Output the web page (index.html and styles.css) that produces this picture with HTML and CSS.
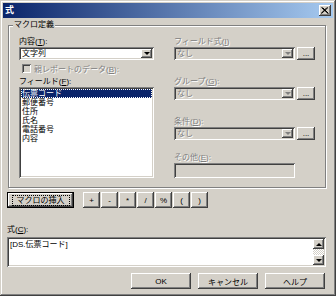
FILE: index.html
```html
<!DOCTYPE html>
<html lang="ja">
<head>
    <meta charset="UTF-8">
    <title>式</title>
    <link rel="stylesheet" href="styles.css">
</head>
<body>
    <div class="window">
        <div class="titlebar">
            <span class="title">式</span>
            <span class="close">
                <svg width="8" height="7" viewBox="0 0 8 7">
                    <path d="M0.5 0.5 L7 6.5 M1.5 0.5 L7.5 6.5 M7 0.5 L0.5 6.5 M6 0.5 L0 6.5" stroke="#000" stroke-width="1" fill="none"/>
                </svg>
            </span>
        </div>

        <div class="content">
            <fieldset class="group">
                <legend>マクロ定義</legend>
                <div class="cols">
                    <div class="col">
                        <div class="label">内容(<u>T</u>):</div>
                        <div class="combo">
                            <span class="value">文字列</span>
                            <span class="drop"><i class="arrow"></i></span>
                        </div>
                        <div class="check disabled">
                            <span class="box"></span>
                            <span>親レポートのデータ(<u>B</u>):</span>
                        </div>
                        <div class="label label-list">フィールド(<u>F</u>):</div>
                        <div class="listbox">
                            <div class="item selected">伝票コード</div>
                            <div class="item">郵便番号</div>
                            <div class="item">住所</div>
                            <div class="item">氏名</div>
                            <div class="item">電話番号</div>
                            <div class="item">内容</div>
                        </div>
                    </div>

                    <div class="col">
                        <div class="field">
                            <div class="label disabled">フィールド式(<u>I</u>)</div>
                            <div class="row">
                                <div class="combo off">
                                    <span class="value">なし</span>
                                    <span class="drop"><i class="arrow"></i></span>
                                </div>
                                <button class="btn more" type="button">...</button>
                            </div>
                        </div>
                        <div class="field">
                            <div class="label disabled">グループ(<u>G</u>):</div>
                            <div class="row">
                                <div class="combo off">
                                    <span class="value">なし</span>
                                    <span class="drop"><i class="arrow"></i></span>
                                </div>
                                <button class="btn more" type="button">...</button>
                            </div>
                        </div>
                        <div class="field">
                            <div class="label disabled">条件(<u>D</u>):</div>
                            <div class="row">
                                <div class="combo off">
                                    <span class="value">なし</span>
                                    <span class="drop"><i class="arrow"></i></span>
                                </div>
                                <button class="btn more" type="button">...</button>
                            </div>
                        </div>
                        <div class="field other">
                            <div class="label disabled">その他(<u>E</u>):</div>
                            <div class="textbox"></div>
                        </div>
                    </div>
                </div>
            </fieldset>

            <div class="ops">
                <button class="btn default insert" type="button"><span class="focus">マクロの挿入</span></button>
                <div class="op_buttons">
                    <button class="btn op" type="button">+</button>
                    <button class="btn op" type="button">-</button>
                    <button class="btn op" type="button">*</button>
                    <button class="btn op" type="button">/</button>
                    <button class="btn op" type="button">%</button>
                    <button class="btn op" type="button">(</button>
                    <button class="btn op" type="button">)</button>
                </div>
            </div>

            <div class="label label-memo">式(<u>C</u>):</div>
            <div class="memo">
                <div class="memo_text">[DS.伝票コード]</div>
                <div class="scrollbar">
                    <span class="sb_btn"><i class="arrow up"></i></span>
                    <span class="sb_track"></span>
                    <span class="sb_btn"><i class="arrow"></i></span>
                </div>
            </div>

            <div class="actions">
                <button class="btn action" type="button">OK</button>
                <button class="btn action" type="button">キャンセル</button>
                <button class="btn action" type="button">ヘルプ</button>
            </div>
        </div>
    </div>
</body>
</html>
```

FILE: styles.css
```css
* {
    box-sizing: border-box;
}
body {
    margin: 0;
    font-family: "Liberation Sans", "Noto Sans CJK JP", sans-serif;
    font-size: 8px;
    color: #000;
    background-color: #d4d0c8;
}
u {
    text-decoration-thickness: 1px;
    text-underline-offset: 1px;
}
.window {
    width: 336px;
    height: 296px;
    padding: 3px;
    background-color: #d4d0c8;
    box-shadow: inset -1px -1px #404040, inset 1px 1px #d4d0c8, inset -2px -2px #808080, inset 2px 2px #fff;
}
.titlebar {
    height: 15px;
    display: flex;
    align-items: center;
    justify-content: space-between;
    padding: 0 2px 0 2px;
    background: linear-gradient(to right, #0a246a, #a6caf0);
}
.title {
    color: white;
    font-weight: bold;
    font-size: 9px;
    line-height: 15px;
}
.close {
    width: 12px;
    height: 11px;
    display: flex;
    align-items: center;
    justify-content: center;
    background-color: #d4d0c8;
    box-shadow: inset -1px -1px #404040, inset 1px 1px #fff, inset -2px -2px #808080;
}
.content {
    padding: 0 7px 0 4px;
}

/* group box */
.group {
    margin: 2px 0 0 1px;
    padding: 7px 10px 9px 10px;
    min-width: 0;
    border: 1px solid #808080;
    box-shadow: 1px 1px 0 #fff, inset 1px 1px 0 #fff;
}
.group legend {
    margin-left: -6px;
    padding: 0 1px;
    line-height: 10px;
    background-color: #d4d0c8;
}
.cols {
    display: grid;
    grid-template-columns: 135px 141px;
    column-gap: 20px;
}
.label {
    line-height: 10px;
    height: 10px;
    white-space: nowrap;
}
.disabled {
    color: #808080;
    text-shadow: 1px 1px 0 #fff;
}

/* combo box */
.combo {
    height: 13px;
    display: flex;
    align-items: center;
    padding: 2px;
    background-color: white;
    box-shadow: inset 1px 1px #808080, inset -1px -1px #fff, inset 2px 2px #404040, inset -2px -2px #d4d0c8;
}
.combo .value {
    flex: 1;
    line-height: 9px;
    padding-left: 1px;
}
.combo.off {
    width: 121px;
    background-color: #d4d0c8;
    color: #808080;
    text-shadow: 1px 1px 0 #fff;
}
.drop {
    width: 11px;
    height: 9px;
    display: flex;
    align-items: center;
    justify-content: center;
    background-color: #d4d0c8;
    box-shadow: inset -1px -1px #404040, inset 1px 1px #fff, inset -2px -2px #808080;
}
.arrow {
    display: block;
    width: 0;
    height: 0;
    border-left: 3px solid transparent;
    border-right: 3px solid transparent;
    border-top: 3px solid #000;
}
.arrow.up {
    border-top: none;
    border-bottom: 3px solid #000;
}
.combo.off .arrow {
    border-top-color: #808080;
}

/* checkbox */
.check {
    height: 11px;
    margin-top: 3px;
    display: flex;
    align-items: center;
    gap: 3px;
    padding-left: 3px;
    white-space: nowrap;
}
.check .box {
    width: 9px;
    height: 9px;
    background-color: #d4d0c8;
    box-shadow: inset 1px 1px #808080, inset -1px -1px #fff, inset 2px 2px #404040;
}
.label-list {
    margin-top: 3px;
}

/* list box */
.listbox {
    height: 91px;
    padding: 2px;
    background-color: white;
    box-shadow: inset 1px 1px #808080, inset -1px -1px #fff, inset 2px 2px #404040, inset -2px -2px #d4d0c8;
}
.item {
    line-height: 9px;
    height: 9px;
    padding-left: 1px;
    white-space: nowrap;
}
.item.selected {
    background-color: #0a246a;
    color: white;
    outline: 1px dotted #fff;
    outline-offset: -1px;
}

/* right column */
.field + .field {
    margin-top: 17px;
}
.field.other {
    margin-top: 13px;
}
.row {
    height: 13px;
    display: flex;
    gap: 2px;
}
.textbox {
    width: 121px;
    height: 15px;
    background-color: #d4d0c8;
    box-shadow: inset 1px 1px #808080, inset -1px -1px #fff, inset 2px 2px #404040, inset -2px -2px #d4d0c8;
}

/* buttons */
.btn {
    padding: 0;
    border: none;
    font: inherit;
    color: #000;
    background-color: #d4d0c8;
    box-shadow: inset -1px -1px #404040, inset 1px 1px #fff, inset -2px -2px #808080;
    cursor: pointer;
}
.btn.default {
    box-shadow: inset 0 0 0 1px #000, inset -2px -2px #404040, inset 2px 2px #fff, inset -3px -3px #808080;
}
.more {
    width: 18px;
    height: 13px;
    line-height: 8px;
}
.ops {
    margin-top: 4px;
    height: 16px;
    display: flex;
    gap: 9px;
}
.insert {
    width: 67px;
    height: 16px;
    display: flex;
    align-items: center;
    justify-content: center;
}
.focus {
    border: 1px dotted #000;
    padding: 0 4px;
    line-height: 9px;
}
.op_buttons {
    display: flex;
    gap: 1px;
}
.op {
    width: 17px;
    height: 16px;
}

/* formula */
.label-memo {
    margin-top: 17px;
}
.memo {
    margin-top: 2px;
    height: 30px;
    display: flex;
    padding: 2px;
    background-color: white;
    box-shadow: inset 1px 1px #808080, inset -1px -1px #fff, inset 2px 2px #404040, inset -2px -2px #d4d0c8;
}
.memo_text {
    flex: 1;
    padding: 1px 1px;
    line-height: 10px;
}
.scrollbar {
    width: 11px;
    display: flex;
    flex-direction: column;
}
.sb_btn {
    height: 10px;
    display: flex;
    align-items: center;
    justify-content: center;
    background-color: #d4d0c8;
    box-shadow: inset -1px -1px #404040, inset 1px 1px #fff, inset -2px -2px #808080;
}
.sb_track {
    flex: 1;
    background: repeating-conic-gradient(#fff 0 25%, #d4d0c8 0 50%) 0 0 / 2px 2px;
}
.actions {
    margin-top: 6px;
    display: flex;
    justify-content: flex-end;
    gap: 7px;
    padding-right: 1px;
}
.action {
    width: 60px;
    height: 16px;
}
```
